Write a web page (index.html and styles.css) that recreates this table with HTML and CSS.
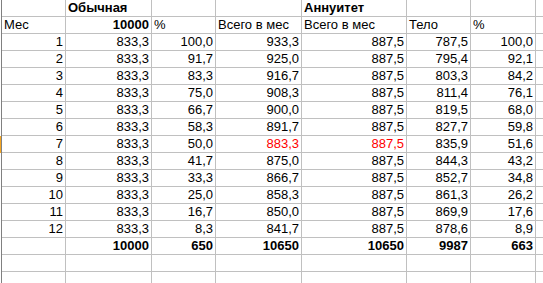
FILE: index.html
```html
<!DOCTYPE html>
<html lang="ru">
<head>
<meta charset="utf-8">
<title>Sheet</title>
<link rel="stylesheet" href="styles.css">
</head>
<body>
<div class="sheet">
  <div class="row first"><div class="gut"></div><div class="c a"></div><div class="c b l bold">Обычная</div><div class="c cc"></div><div class="c d"></div><div class="c e l bold">Аннуитет</div><div class="c f"></div><div class="c g"></div><div class="c h"></div></div>
  <div class="row"><div class="gut"></div><div class="c a l">Мес</div><div class="c b bold">10000</div><div class="c cc l">%</div><div class="c d l">Всего в мес</div><div class="c e l">Всего в мес</div><div class="c f l">Тело</div><div class="c g l">%</div><div class="c h"></div></div>
  <div class="row"><div class="gut"></div><div class="c a">1</div><div class="c b">833,3</div><div class="c cc">100,0</div><div class="c d">933,3</div><div class="c e">887,5</div><div class="c f">787,5</div><div class="c g">100,0</div><div class="c h"></div></div>
  <div class="row"><div class="gut"></div><div class="c a">2</div><div class="c b">833,3</div><div class="c cc">91,7</div><div class="c d">925,0</div><div class="c e">887,5</div><div class="c f">795,4</div><div class="c g">92,1</div><div class="c h"></div></div>
  <div class="row"><div class="gut"></div><div class="c a">3</div><div class="c b">833,3</div><div class="c cc">83,3</div><div class="c d">916,7</div><div class="c e">887,5</div><div class="c f">803,3</div><div class="c g">84,2</div><div class="c h"></div></div>
  <div class="row"><div class="gut"></div><div class="c a">4</div><div class="c b">833,3</div><div class="c cc">75,0</div><div class="c d">908,3</div><div class="c e">887,5</div><div class="c f">811,4</div><div class="c g">76,1</div><div class="c h"></div></div>
  <div class="row"><div class="gut"></div><div class="c a">5</div><div class="c b">833,3</div><div class="c cc">66,7</div><div class="c d">900,0</div><div class="c e">887,5</div><div class="c f">819,5</div><div class="c g">68,0</div><div class="c h"></div></div>
  <div class="row"><div class="gut"></div><div class="c a">6</div><div class="c b">833,3</div><div class="c cc">58,3</div><div class="c d">891,7</div><div class="c e">887,5</div><div class="c f">827,7</div><div class="c g">59,8</div><div class="c h"></div></div>
  <div class="row"><div class="gut sel"></div><div class="c a">7</div><div class="c b">833,3</div><div class="c cc">50,0</div><div class="c d red">883,3</div><div class="c e red">887,5</div><div class="c f">835,9</div><div class="c g">51,6</div><div class="c h"></div></div>
  <div class="row"><div class="gut"></div><div class="c a">8</div><div class="c b">833,3</div><div class="c cc">41,7</div><div class="c d">875,0</div><div class="c e">887,5</div><div class="c f">844,3</div><div class="c g">43,2</div><div class="c h"></div></div>
  <div class="row"><div class="gut"></div><div class="c a">9</div><div class="c b">833,3</div><div class="c cc">33,3</div><div class="c d">866,7</div><div class="c e">887,5</div><div class="c f">852,7</div><div class="c g">34,8</div><div class="c h"></div></div>
  <div class="row"><div class="gut"></div><div class="c a">10</div><div class="c b">833,3</div><div class="c cc">25,0</div><div class="c d">858,3</div><div class="c e">887,5</div><div class="c f">861,3</div><div class="c g">26,2</div><div class="c h"></div></div>
  <div class="row"><div class="gut"></div><div class="c a">11</div><div class="c b">833,3</div><div class="c cc">16,7</div><div class="c d">850,0</div><div class="c e">887,5</div><div class="c f">869,9</div><div class="c g">17,6</div><div class="c h"></div></div>
  <div class="row"><div class="gut"></div><div class="c a">12</div><div class="c b">833,3</div><div class="c cc">8,3</div><div class="c d">841,7</div><div class="c e">887,5</div><div class="c f">878,6</div><div class="c g">8,9</div><div class="c h"></div></div>
  <div class="row"><div class="gut"></div><div class="c a"></div><div class="c b bold">10000</div><div class="c cc bold">650</div><div class="c d bold">10650</div><div class="c e bold">10650</div><div class="c f bold">9987</div><div class="c g bold">663</div><div class="c h"></div></div>
  <div class="row"><div class="gut"></div><div class="c a"></div><div class="c b"></div><div class="c cc"></div><div class="c d"></div><div class="c e"></div><div class="c f"></div><div class="c g"></div><div class="c h"></div></div>
  <div class="row"><div class="gut"></div><div class="c a"></div><div class="c b"></div><div class="c cc"></div><div class="c d"></div><div class="c e"></div><div class="c f"></div><div class="c g"></div><div class="c h"></div></div>
</div>
</body>
</html>
```
FILE: styles.css
```css
html, body {
  margin: 0;
  padding: 0;
  background: #ffffff;
  overflow: hidden;
}
.sheet {
  width: 543px;
  font-family: "Liberation Sans", Arial, sans-serif;
  font-size: 13px;
  color: #000000;
}
.row {
  display: flex;
  height: 17px;
}
.gut {
  flex: 0 0 2px;
  box-sizing: border-box;
  border-right: 1px solid #808080;
  background: #ffffff;
}
.gut.sel {
  background: #f5a623;
}
.c {
  box-sizing: border-box;
  border-right: 1px solid #c0c0c0;
  border-bottom: 1px solid #c0c0c0;
  height: 17px;
  line-height: 16px;
  padding: 0 2px 0 2px;
  text-align: right;
  white-space: nowrap;
  overflow: visible;
}
.c.l {
  text-align: left;
}
.a { flex: 0 0 64px; }
.b { flex: 0 0 86px; }
.cc { flex: 0 0 64px; }
.d { flex: 0 0 86px; }
.e { flex: 0 0 105px; }
.f { flex: 0 0 64px; }
.g { flex: 0 0 65px; }
.h { flex: 1 0 20px; border-right: none; }
.bold {
  font-weight: bold;
}
.red {
  color: #ff0000;
}
```
